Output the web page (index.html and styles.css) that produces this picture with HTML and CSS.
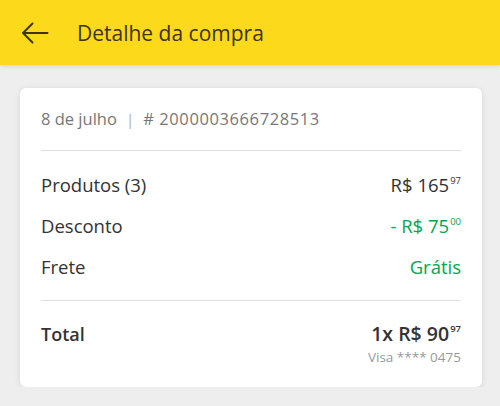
FILE: index.html
```html
<!DOCTYPE html>
<html lang="pt-BR">
<head>
    <meta charset="UTF-8">
    <title>Detalhe da compra</title>
    <link rel="stylesheet" href="styles.css">
</head>
<body>
    <div class="header">
        <svg class="back-icon" width="28" height="22" viewBox="0 0 28 22">
            <path d="M26.5 11H2.5M11.5 1.5L2 11l9.5 9.5" fill="none" stroke="#3a3514" stroke-width="2" stroke-linecap="round" stroke-linejoin="round"/>
        </svg>
        <h1>Detalhe da compra</h1>
    </div>

    <div class="card">
        <div class="order-info">8 de julho <span class="sep">|</span> <span class="order-number"># 2000003666728513</span></div>

        <div class="summary">
            <div class="row">
                <span>Produtos (3)</span>
                <span>R$ 165<sup>97</sup></span>
            </div>
            <div class="row">
                <span>Desconto</span>
                <span class="green">- R$ 75<sup>00</sup></span>
            </div>
            <div class="row">
                <span>Frete</span>
                <span class="green">Grátis</span>
            </div>
        </div>

        <div class="total">
            <span class="total-label">Total</span>
            <div class="total-right">
                <div class="total-value">1x R$ 90<sup>97</sup></div>
                <div class="card-info">Visa **** 0475</div>
            </div>
        </div>
    </div>
</body>
</html>
```

FILE: styles.css
```css
body {
    margin: 0;
    font-family: "Open Sans", Arial, sans-serif;
    background-color: #eeeeee;
    color: #333;
}

.header {
    display: flex;
    align-items: center;
    height: 65px;
    padding-left: 21px;
    background-color: #fdd91c;
    box-shadow: 0 1px 5px rgba(0, 0, 0, 0.12);
}

.back-icon {
    margin-right: 28px;
}

.header h1 {
    margin: 0;
    font-size: 21px;
    font-weight: 400;
    color: #3a3514;
}

.card {
    margin: 23px 18px 0 20px;
    padding: 0 21px;
    background-color: white;
    border-radius: 6px;
    box-shadow: 0 1px 6px rgba(0, 0, 0, 0.1);
    height: 299px;
    box-sizing: border-box;
}

.order-info {
    padding: 20px 0 19px;
    font-size: 16.5px;
    line-height: 22px;
    color: #777;
    border-bottom: 1px solid #e0e0e0;
}

.order-number {
    letter-spacing: 0.6px;
}

.sep {
    margin: 0 5px;
    color: #aaa;
    font-size: 14px;
}

.summary {
    padding: 13px 0;
    border-bottom: 1px solid #e0e0e0;
}

.row {
    display: flex;
    justify-content: space-between;
    font-size: 18.5px;
    line-height: 41px;
}

.green {
    color: #00a650;
}

sup {
    font-size: 9.5px;
    vertical-align: 8px;
    line-height: 0;
    margin-left: 1px;
}

.total {
    display: flex;
    justify-content: space-between;
    padding-top: 21px;
}

.total-label {
    font-size: 18px;
    font-weight: 600;
    line-height: 24px;
}

.total-right {
    text-align: right;
}

.total-value {
    font-size: 19.5px;
    font-weight: 600;
    line-height: 24px;
}

.total-value sup {
    vertical-align: 9px;
}

.card-info {
    font-size: 13.5px;
    line-height: 18px;
    color: #999;
    margin-top: 2px;
}
```
